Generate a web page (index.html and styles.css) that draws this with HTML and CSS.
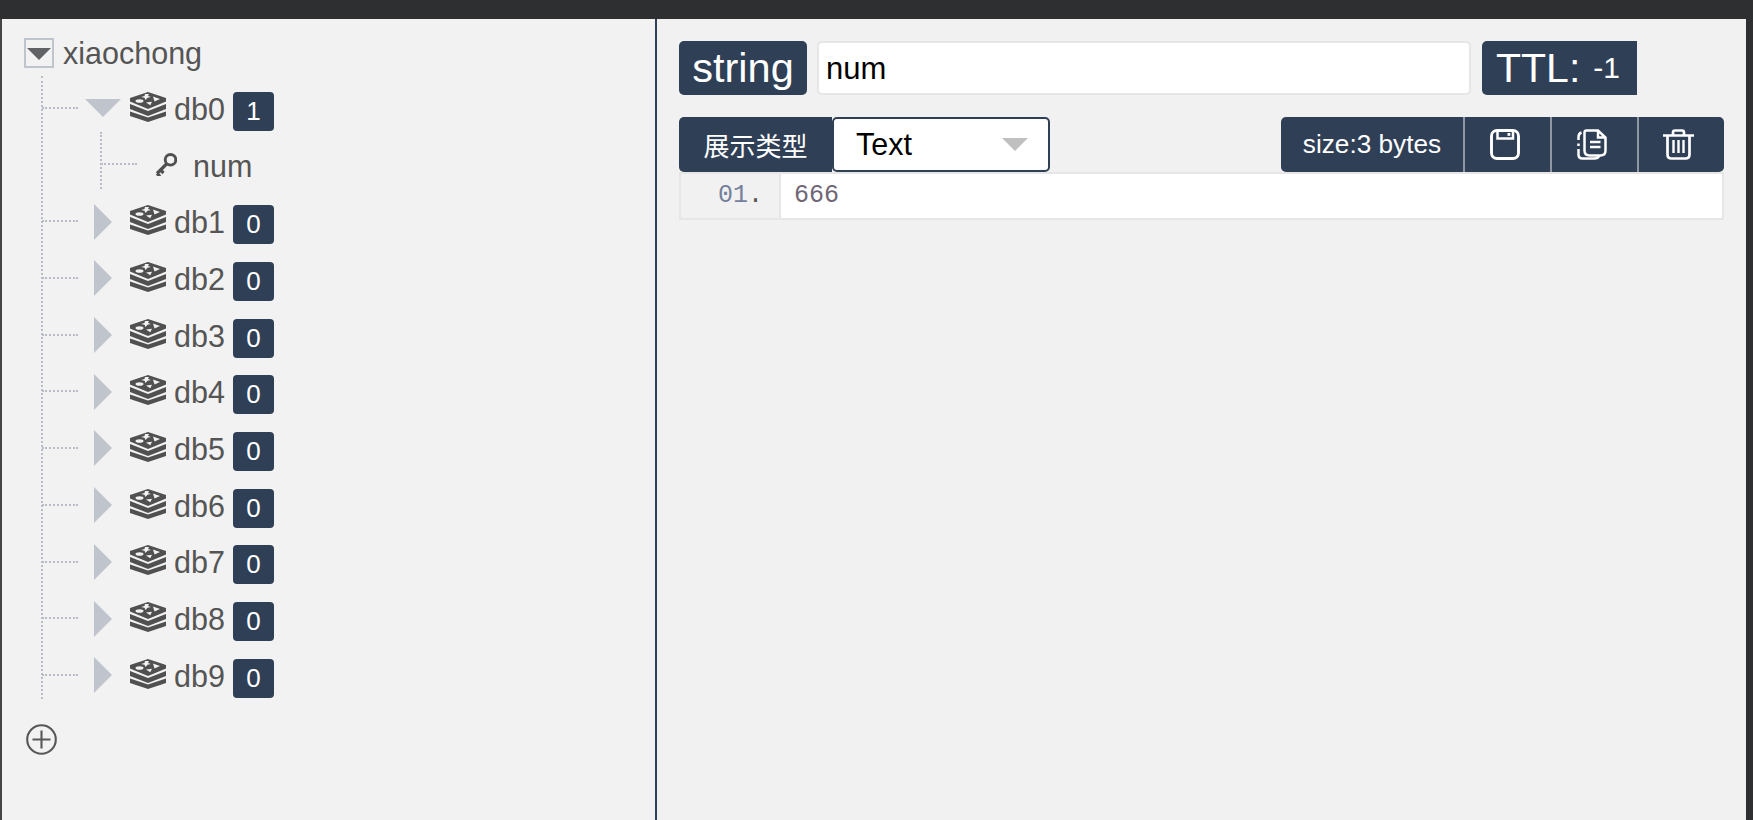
FILE: index.html
```html
<!DOCTYPE html>
<html lang="zh">
<head>
<meta charset="utf-8">
<title>xiaochong</title>
<link rel="stylesheet" href="styles.css">
</head>
<body>
<svg class="defs" width="0" height="0" aria-hidden="true">
  <symbol id="stack" viewBox="0 0 36 30">
    <path fill="#505050" d="M0 19.500 18 25.500 36 19.500V24L18 30 0 24Z"/>
    <path fill="#505050" d="M0 12 18 19 36 12V17L18 24 0 17Z"/>
    <path fill="#505050" d="M18 0 36 6V9.500L18 17 0 9.500V6Z"/>
    <path fill="#f2f2f2" d="M15 2 19 2 18 4 21 5 17.500 5.800 15.500 8 14.500 5.800 11 5 14.500 4Z"/>
    <ellipse fill="#f2f2f2" cx="9.500" cy="9" rx="4" ry="1.800"/>
    <path fill="#f2f2f2" d="M23 4.500 30 7 24.500 9.500Z"/>
    <path fill="#f2f2f2" d="M16 10.500 22 9.800 20.300 13.300Z"/>
  </symbol>
</svg>
<div class="topbar"></div>
<main class="app">
  <aside class="sidebar">
    <div class="row root">
      <span class="expander"><span class="tri-root"></span></span>
      <span class="name">xiaochong</span>
    </div>
    <ul class="dbs">
      <li class="open">
        <div class="row db"><span class="arrow"><span class="tri-down"></span></span><svg class="stack"><use href="#stack"/></svg><span class="name">db0</span><span class="badge">1</span></div>
        <div class="row key">
          <svg class="key-icon" viewBox="0 0 22 23"><circle cx="15.500" cy="6.800" r="5.300" fill="none" stroke="#505050" stroke-width="2.900"/><path d="M11.500 11 2 20.500M2 20.500 5 23.500M5.500 17 8.500 20" fill="none" stroke="#505050" stroke-width="3.200"/></svg>
          <span class="name">num</span>
        </div>
      </li>
      <li><div class="row db"><span class="arrow"><span class="tri-right"></span></span><svg class="stack"><use href="#stack"/></svg><span class="name">db1</span><span class="badge">0</span></div></li>
      <li><div class="row db"><span class="arrow"><span class="tri-right"></span></span><svg class="stack"><use href="#stack"/></svg><span class="name">db2</span><span class="badge">0</span></div></li>
      <li><div class="row db"><span class="arrow"><span class="tri-right"></span></span><svg class="stack"><use href="#stack"/></svg><span class="name">db3</span><span class="badge">0</span></div></li>
      <li><div class="row db"><span class="arrow"><span class="tri-right"></span></span><svg class="stack"><use href="#stack"/></svg><span class="name">db4</span><span class="badge">0</span></div></li>
      <li><div class="row db"><span class="arrow"><span class="tri-right"></span></span><svg class="stack"><use href="#stack"/></svg><span class="name">db5</span><span class="badge">0</span></div></li>
      <li><div class="row db"><span class="arrow"><span class="tri-right"></span></span><svg class="stack"><use href="#stack"/></svg><span class="name">db6</span><span class="badge">0</span></div></li>
      <li><div class="row db"><span class="arrow"><span class="tri-right"></span></span><svg class="stack"><use href="#stack"/></svg><span class="name">db7</span><span class="badge">0</span></div></li>
      <li><div class="row db"><span class="arrow"><span class="tri-right"></span></span><svg class="stack"><use href="#stack"/></svg><span class="name">db8</span><span class="badge">0</span></div></li>
      <li><div class="row db"><span class="arrow"><span class="tri-right"></span></span><svg class="stack"><use href="#stack"/></svg><span class="name">db9</span><span class="badge">0</span></div></li>
    </ul>
    <svg class="add" viewBox="0 0 31 31"><circle cx="15.500" cy="15.500" r="14.300" fill="none" stroke="#585858" stroke-width="2.100"/><path d="M6.500 15.500H24.500M15.500 6.500V24.500" fill="none" stroke="#585858" stroke-width="2.100"/></svg>
  </aside>
  <section class="pane">
    <div class="key-row">
      <span class="type">string</span>
      <div class="key-input"><span class="key-text">num</span></div>
      <span class="ttl">TTL:<small>-1</small></span>
    </div>
    <div class="tool-row">
      <span class="view-label">展示类型</span>
      <div class="select"><span>Text</span><i class="caret"></i></div>
      <div class="actions">
        <span class="size">size:3 bytes</span>
        <button class="act" type="button" aria-label="保存">
          <svg width="30" height="31" viewBox="0 0 30 31"><rect x="1.500" y="1.500" width="27" height="28" rx="5.500" fill="none" stroke="#fff" stroke-width="2.900"/><path d="M7.500 2V9.500H23V2" fill="none" stroke="#fff" stroke-width="2.500"/><rect x="17.500" y="4" width="2.800" height="2.800" fill="#fff"/></svg>
        </button>
        <button class="act" type="button" aria-label="复制">
          <svg width="30" height="31" viewBox="0 0 30 31"><path d="M9.500 1.500H21L28.500 8.500V21.500Q28.500 26.500 23.500 26.500H12.500Q7.500 26.500 7.500 21.500V3.500Q7.500 1.500 9.500 1.500ZM21 1.500V8.500H28.500" fill="none" stroke="#fff" stroke-width="2.500"/><path d="M13 13H23.500M13 18H23.500" stroke="#fff" stroke-width="2.600"/><path d="M4.500 3.500Q1.500 4.500 1.500 8V11M1.500 14.500V17M1.500 20V25.500Q1.500 29.500 5.500 29.500H17.500Q21 29.500 22 27" fill="none" stroke="#fff" stroke-width="2.500"/></svg>
        </button>
        <button class="act" type="button" aria-label="删除">
          <svg width="31" height="31" viewBox="0 0 31 31"><path d="M0 6.500H31M10 5.500V3.500Q10 1.500 12 1.500H19Q21 1.500 21 3.500V5.500" fill="none" stroke="#fff" stroke-width="2.700"/><path d="M4.500 6.500V25.500Q4.500 29.500 8.500 29.500H22.500Q26.500 29.500 26.500 25.500V6.500" fill="none" stroke="#fff" stroke-width="2.700"/><path d="M10.500 11V24M15.500 11V24M20.500 11V24" stroke="#fff" stroke-width="2.400"/></svg>
        </button>
      </div>
    </div>
    <div class="editor">
      <span class="gutter"><span class="ln">01</span><span class="dot">.</span></span>
      <span class="code">666</span>
    </div>
  </section>
</main>
</body>
</html>
```
FILE: styles.css
```css
* { box-sizing: border-box; }
html, body { margin: 0; height: 100%; }
body {
  display: flex;
  flex-direction: column;
  height: 820px;
  overflow: hidden;
  background: #f1f1f1;
  font-family: "Liberation Sans", "Noto Sans CJK SC", sans-serif;
}
.defs { position: absolute; }
.topbar { flex: 0 0 19px; background: #2e2f31; }
.app {
  flex: 1;
  display: flex;
  min-height: 0;
  border-left: 2px solid #444;
  border-right: 7px solid #2e2f31;
}
.sidebar {
  flex: 0 0 655px;
  background: #f2f2f2;
  border-right: 2px solid #2f3f56;
  padding: 6px 0 0 22px;
  color: #555;
  font-size: 30.500px;
}
.row { display: flex; align-items: center; height: 56.700px; }
.root { height: 56px; }
.expander {
  display: flex;
  align-items: center;
  justify-content: center;
  width: 30px;
  height: 30px;
  border: 2px solid #c0c4cc;
  margin-right: 9px;
}
.tri-root {
  width: 0; height: 0;
  border-left: 12px solid transparent;
  border-right: 12px solid transparent;
  border-top: 12px solid #606266;
  margin-top: 2px;
}
.dbs {
  list-style: none;
  margin: 0;
  padding: 0;
  position: relative;
}
.dbs::before {
  content: "";
  position: absolute;
  left: 17px;
  top: -5px;
  bottom: 6px;
  border-left: 2px dotted #b8bcc6;
}
.db { position: relative; padding-left: 61px; }
.db::before {
  content: "";
  position: absolute;
  left: 18px;
  top: 26px;
  width: 36px;
  border-top: 2px dotted #b8bcc6;
}
.arrow {
  flex: 0 0 36px;
  display: flex;
  align-items: center;
  justify-content: center;
  margin-right: 9px;
}
.tri-down {
  width: 0; height: 0;
  border-left: 18px solid transparent;
  border-right: 18px solid transparent;
  border-top: 18px solid #c0c4cc;
  margin-top: -2px;
}
.tri-right {
  width: 0; height: 0;
  border-top: 18px solid transparent;
  border-bottom: 18px solid transparent;
  border-left: 18px solid #c0c4cc;
  margin-top: -2px;
}
.stack { width: 36px; height: 30px; margin-right: 8px; margin-top: -5px; flex: none; }
.name { line-height: 34px; margin-top: -1px; }
.db .name { margin-top: -1px; }
.badge {
  display: flex;
  align-items: center;
  justify-content: center;
  width: 41px;
  height: 39px;
  margin-left: 8px;
  margin-top: 4px;
  background: #2f3f56;
  border-radius: 4px;
  color: #fff;
  font-size: 26px;
}
.key { position: relative; padding-left: 131px; }
.key::before {
  content: "";
  position: absolute;
  left: 76px;
  top: -6px;
  height: 57px;
  border-left: 2px dotted #b8bcc6;
}
.key::after {
  content: "";
  position: absolute;
  left: 77px;
  top: 25px;
  width: 36px;
  border-top: 2px dotted #b8bcc6;
}
.key-icon { width: 22px; height: 23px; margin-right: 16px; margin-top: -3px; flex: none; }
.add { display: block; width: 31px; height: 31px; margin: 19px 0 0 2px; }
.pane {
  flex: 1;
  min-width: 0;
  padding: 22px 22px 0;
  background: #f1f1f1;
}
.key-row { display: flex; height: 54px; margin-right: 87px; }
.type {
  flex: none;
  display: flex;
  align-items: center;
  width: 128px;
  justify-content: center;
  background: #2f3f56;
  border-radius: 5px;
  color: #fff;
  font-size: 41.500px;
  margin-right: 10px;
}
.key-input {
  flex: 1;
  display: flex;
  align-items: center;
  padding-left: 7px;
  background: #fff;
  border: 2px solid #e6e6e6;
  border-radius: 5px;
  color: #000;
  font-size: 31px;
  margin-right: 11px;
}
.key-text { margin-top: 2px; }
.ttl {
  flex: 0 0 155px;
  display: flex;
  align-items: center;
  padding-left: 14px;
  background: #2f3f56;
  border-radius: 5px 0 0 5px;
  color: #fff;
  font-size: 41px;
}
.ttl small { font-size: 30px; margin-left: 13px; }
.tool-row { display: flex; height: 55px; margin-top: 22px; }
.view-label {
  flex: 0 0 153px;
  display: flex;
  align-items: center;
  justify-content: center;
  background: #2f3f56;
  border-radius: 5px 0 0 5px;
  color: #fff;
  font-size: 26px;
}
.select {
  flex: 0 0 218px;
  display: flex;
  align-items: center;
  justify-content: space-between;
  padding: 0 20px 0 22px;
  background: #fff;
  border: 2px solid #2f3f56;
  border-radius: 5px;
  color: #000;
  font-size: 30.500px;
}
.caret {
  width: 0; height: 0;
  border-left: 13px solid transparent;
  border-right: 13px solid transparent;
  border-top: 13px solid #c0c0c0;
}
.actions {
  margin-left: auto;
  display: flex;
  width: 443px;
  background: #2f3f56;
  border-radius: 5px;
  color: #fff;
  font-size: 26.200px;
}
.size {
  flex: 0 0 182px;
  display: flex;
  align-items: center;
  justify-content: center;
}
.act {
  flex: 1;
  display: flex;
  align-items: center;
  justify-content: center;
  padding: 0 6px 0 0;
  background: transparent;
  border: 0;
  border-left: 2px solid #8f97a3;
}
.editor {
  display: flex;
  height: 48px;
  background: #fff;
  border: 2px solid #e6e6e6;
  font-family: "Liberation Mono", monospace;
  font-size: 25px;
  line-height: 43px;
}
.gutter {
  flex: 0 0 100px;
  padding-left: 37px;
  background: #f1f1f1;
  border-right: 2px solid #e6e6e6;
}
.ln { color: #75809c; }
.dot { color: #555; }
.code { padding-left: 13px; color: #6f6676; }
```
